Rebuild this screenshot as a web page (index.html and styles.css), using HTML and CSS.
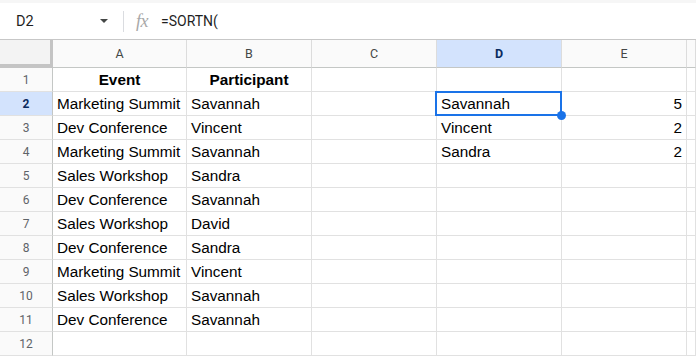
FILE: index.html
```html
<!DOCTYPE html>
<html>
<head>
<meta charset="utf-8">
<link rel="stylesheet" href="styles.css">
</head>
<body>
<div class="topbar">
  <div class="namebox"><span class="ref">D2</span><span class="caret"></span></div>
  <div class="sep"></div>
  <span class="fx">fx</span>
  <span class="formula">=SORTN(</span>
</div>
<div class="sheet">
  <div class="corner"></div>
  <div class="colhdr">A</div>
  <div class="colhdr">B</div>
  <div class="colhdr">C</div>
  <div class="colhdr active">D</div>
  <div class="colhdr">E</div>
  <div class="colhdr"></div>

  <div class="rowhdr">1</div>
  <div class="cell bold center">Event</div>
  <div class="cell bold center">Participant</div>
  <div class="cell"></div><div class="cell"></div><div class="cell"></div><div class="cell"></div>

  <div class="rowhdr active">2</div>
  <div class="cell">Marketing Summit</div>
  <div class="cell">Savannah</div>
  <div class="cell"></div>
  <div class="cell selected">Savannah<span class="sel-box"></span><span class="handle"></span></div>
  <div class="cell num">5</div>
  <div class="cell"></div>

  <div class="rowhdr">3</div>
  <div class="cell">Dev Conference</div>
  <div class="cell">Vincent</div>
  <div class="cell"></div>
  <div class="cell">Vincent</div>
  <div class="cell num">2</div>
  <div class="cell"></div>

  <div class="rowhdr">4</div>
  <div class="cell">Marketing Summit</div>
  <div class="cell">Savannah</div>
  <div class="cell"></div>
  <div class="cell">Sandra</div>
  <div class="cell num">2</div>
  <div class="cell"></div>

  <div class="rowhdr">5</div>
  <div class="cell">Sales Workshop</div>
  <div class="cell">Sandra</div>
  <div class="cell"></div><div class="cell"></div><div class="cell"></div><div class="cell"></div>

  <div class="rowhdr">6</div>
  <div class="cell">Dev Conference</div>
  <div class="cell">Savannah</div>
  <div class="cell"></div><div class="cell"></div><div class="cell"></div><div class="cell"></div>

  <div class="rowhdr">7</div>
  <div class="cell">Sales Workshop</div>
  <div class="cell">David</div>
  <div class="cell"></div><div class="cell"></div><div class="cell"></div><div class="cell"></div>

  <div class="rowhdr">8</div>
  <div class="cell">Dev Conference</div>
  <div class="cell">Sandra</div>
  <div class="cell"></div><div class="cell"></div><div class="cell"></div><div class="cell"></div>

  <div class="rowhdr">9</div>
  <div class="cell">Marketing Summit</div>
  <div class="cell">Vincent</div>
  <div class="cell"></div><div class="cell"></div><div class="cell"></div><div class="cell"></div>

  <div class="rowhdr">10</div>
  <div class="cell">Sales Workshop</div>
  <div class="cell">Savannah</div>
  <div class="cell"></div><div class="cell"></div><div class="cell"></div><div class="cell"></div>

  <div class="rowhdr">11</div>
  <div class="cell">Dev Conference</div>
  <div class="cell">Savannah</div>
  <div class="cell"></div><div class="cell"></div><div class="cell"></div><div class="cell"></div>

  <div class="rowhdr">12</div>
  <div class="cell"></div><div class="cell"></div><div class="cell"></div><div class="cell"></div><div class="cell"></div><div class="cell"></div>
</div>
</body>
</html>
```

FILE: styles.css
```css
* { box-sizing: border-box; }
html, body {
  margin: 0;
  padding: 0;
  background: #ffffff;
  overflow: hidden;
}
body {
  width: 696px;
  height: 356px;
  font-family: "Liberation Sans", Arial, sans-serif;
}

.topbar {
  height: 40px;
  border-top: 3px solid #f6f6f6;
  border-bottom: 1px solid #c7c7c7;
  display: flex;
  align-items: center;
  background: #fff;
}
.namebox {
  width: 112px;
  display: flex;
  align-items: center;
  padding-left: 16px;
}
.ref {
  font-family: Roboto, "Liberation Sans", sans-serif;
  font-size: 14.5px;
  color: #1f1f1f;
}
.caret {
  margin-left: auto;
  margin-right: 4px;
  width: 0;
  height: 0;
  border-left: 4.5px solid transparent;
  border-right: 4.5px solid transparent;
  border-top: 4.5px solid #444746;
}
.sep {
  margin-left: 11px;
  width: 1px;
  height: 21px;
  background: #dadce0;
}
.fx {
  margin-left: 12px;
  font-family: "Liberation Serif", "Times New Roman", serif;
  font-style: italic;
  font-size: 18px;
  color: #a8a8a8;
  letter-spacing: -0.5px;
}
.formula {
  margin-left: 13px;
  font-family: Roboto, "Liberation Sans", sans-serif;
  font-size: 14px;
  color: #1f1f1f;
}

.sheet {
  display: grid;
  grid-template-columns: 53px 134px 125px 125px 125px 125px 9px;
  grid-template-rows: 28px repeat(12, 24px);
}

.corner {
  background: #f3f3f3;
  border-right: 3px solid #c4c4c4;
  border-bottom: 4px solid #c4c4c4;
}
.colhdr {
  background: #fafafa;
  border-right: 1px solid #dcdcdc;
  border-bottom: 1px solid #c4c7c5;
  display: flex;
  align-items: center;
  justify-content: center;
  font-family: Roboto, "Liberation Sans", sans-serif;
  font-size: 12.5px;
  color: #444746;
}
.colhdr.active {
  background: #d3e3fd;
  color: #0a2a5e;
  font-weight: bold;
}
.rowhdr {
  background: #fafafa;
  border-right: 1px solid #c4c7c5;
  border-bottom: 1px solid #e1e1e1;
  display: flex;
  align-items: center;
  justify-content: center;
  font-family: Roboto, "Liberation Sans", sans-serif;
  font-size: 12px;
  color: #5f6368;
}
.rowhdr.active {
  background: #d3e3fd;
  color: #0a2a5e;
  font-weight: bold;
}

.cell {
  border-right: 1px solid #e1e1e1;
  border-bottom: 1px solid #e1e1e1;
  display: flex;
  align-items: center;
  padding: 0 4px;
  font-size: 15.3px;
  color: #000;
  white-space: nowrap;
  overflow: visible;
}
.cell.bold { font-weight: bold; }
.cell.center { justify-content: center; }
.cell.num { justify-content: flex-end; padding-right: 4px; }

.cell.selected { position: relative; }
.sel-box {
  position: absolute;
  left: -2px;
  top: -1px;
  right: -1px;
  bottom: -1px;
  border: 2px solid #1a73e8;
  z-index: 2;
}
.handle {
  position: absolute;
  right: -5px;
  bottom: -5px;
  width: 9px;
  height: 9px;
  border-radius: 50%;
  background: #1a73e8;
  z-index: 3;
}
```
